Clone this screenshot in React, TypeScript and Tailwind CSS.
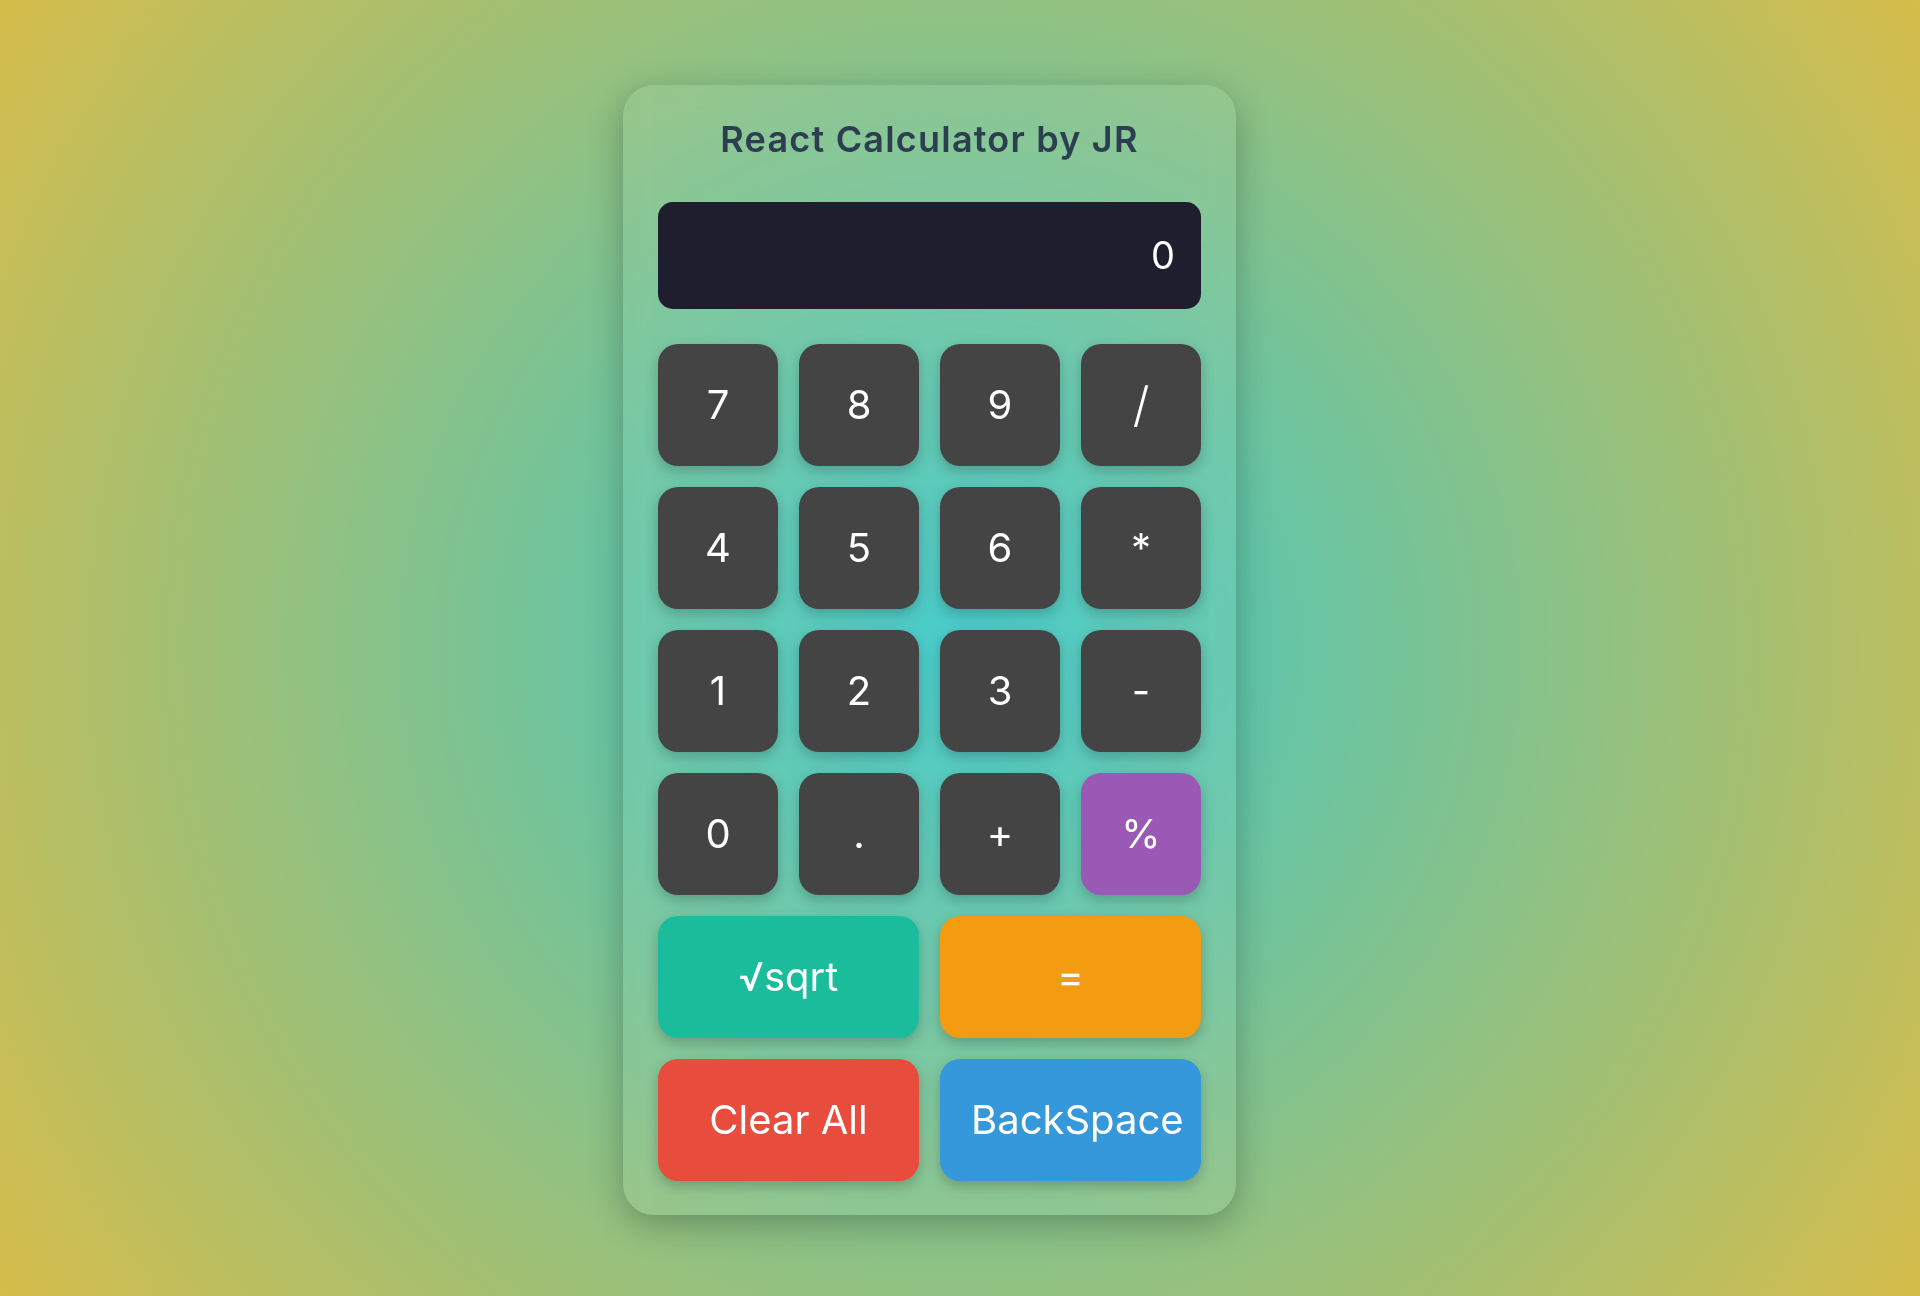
type Key = {
  label: string
  tone?: 'dark' | 'purple' | 'teal' | 'orange' | 'red' | 'blue'
  wide?: boolean
}

const keys: Key[] = [
  { label: '7' },
  { label: '8' },
  { label: '9' },
  { label: '/' },
  { label: '4' },
  { label: '5' },
  { label: '6' },
  { label: '*' },
  { label: '1' },
  { label: '2' },
  { label: '3' },
  { label: '-' },
  { label: '0' },
  { label: '.' },
  { label: '+' },
  { label: '%', tone: 'purple' },
  { label: '√sqrt', tone: 'teal', wide: true },
  { label: '=', tone: 'orange', wide: true },
  { label: 'Clear All', tone: 'red', wide: true },
  { label: 'BackSpace', tone: 'blue', wide: true },
]

const toneClass: Record<NonNullable<Key['tone']>, string> = {
  dark: 'bg-[#444444]',
  purple: 'bg-[#9b59b6]',
  teal: 'bg-[#1abc9c]',
  orange: 'bg-[#f39c12]',
  red: 'bg-[#e74c3c]',
  blue: 'bg-[#3498db]',
}

function CalcButton({ k }: { k: Key }) {
  const tone = toneClass[k.tone ?? 'dark']
  const long = k.label === 'BackSpace'
  return (
    <button
      type="button"
      className={`flex h-[122px] items-center overflow-visible whitespace-nowrap rounded-[20px] text-[40px] font-normal text-white shadow-[0_5px_14px_rgba(0,0,0,0.22)] ${tone} ${
        k.wide ? 'col-span-2' : ''
      } ${long ? 'justify-start pl-[31px]' : 'justify-center'}`}
    >
      {k.label === '/' ? <span className="text-[48px] font-light">/</span> : k.label}
    </button>
  )
}

export default function App() {
  return (
    <div
      className="flex min-h-screen w-full items-center justify-center bg-[radial-gradient(circle_at_center,#3ac8c8_0%,#d6bc4a_100%)] pr-[61px] pt-[4px]"
      style={{ fontFamily: 'Inter, "Open Sans", "Liberation Sans", sans-serif' }}
    >
      <div className="w-[613px] rounded-[31px] bg-white/[0.07] px-[35px] pb-[34px] pt-[32px] shadow-[0_10px_34px_rgba(0,0,0,0.26)] backdrop-blur-md">
        <h1 className="h-[44px] text-center text-[36px] font-semibold leading-[44px] tracking-[1.2px] text-[#2c3e50]">
          React Calculator by JR
        </h1>

        <div className="mt-[41px] flex h-[107px] items-center justify-end rounded-[15px] bg-[#1f1e2e] pr-[26px] text-[38px] text-white">
          0
        </div>

        <div className="mt-[35px] grid grid-cols-4 gap-x-[21px] gap-y-[21px]">
          {keys.map((k) => (
            <CalcButton key={k.label} k={k} />
          ))}
        </div>
      </div>
    </div>
  )
}
